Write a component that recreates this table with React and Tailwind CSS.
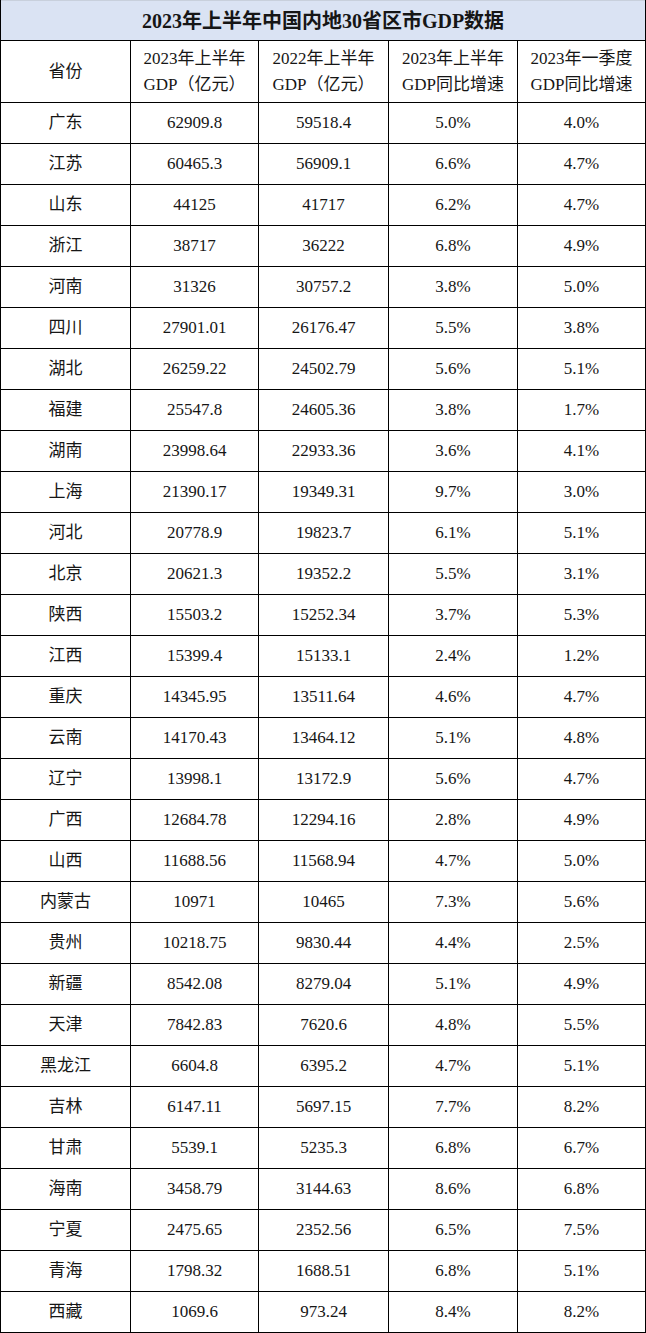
const rows = [
  ['广东', '62909.8', '59518.4', '5.0%', '4.0%'],
  ['江苏', '60465.3', '56909.1', '6.6%', '4.7%'],
  ['山东', '44125', '41717', '6.2%', '4.7%'],
  ['浙江', '38717', '36222', '6.8%', '4.9%'],
  ['河南', '31326', '30757.2', '3.8%', '5.0%'],
  ['四川', '27901.01', '26176.47', '5.5%', '3.8%'],
  ['湖北', '26259.22', '24502.79', '5.6%', '5.1%'],
  ['福建', '25547.8', '24605.36', '3.8%', '1.7%'],
  ['湖南', '23998.64', '22933.36', '3.6%', '4.1%'],
  ['上海', '21390.17', '19349.31', '9.7%', '3.0%'],
  ['河北', '20778.9', '19823.7', '6.1%', '5.1%'],
  ['北京', '20621.3', '19352.2', '5.5%', '3.1%'],
  ['陕西', '15503.2', '15252.34', '3.7%', '5.3%'],
  ['江西', '15399.4', '15133.1', '2.4%', '1.2%'],
  ['重庆', '14345.95', '13511.64', '4.6%', '4.7%'],
  ['云南', '14170.43', '13464.12', '5.1%', '4.8%'],
  ['辽宁', '13998.1', '13172.9', '5.6%', '4.7%'],
  ['广西', '12684.78', '12294.16', '2.8%', '4.9%'],
  ['山西', '11688.56', '11568.94', '4.7%', '5.0%'],
  ['内蒙古', '10971', '10465', '7.3%', '5.6%'],
  ['贵州', '10218.75', '9830.44', '4.4%', '2.5%'],
  ['新疆', '8542.08', '8279.04', '5.1%', '4.9%'],
  ['天津', '7842.83', '7620.6', '4.8%', '5.5%'],
  ['黑龙江', '6604.8', '6395.2', '4.7%', '5.1%'],
  ['吉林', '6147.11', '5697.15', '7.7%', '8.2%'],
  ['甘肃', '5539.1', '5235.3', '6.8%', '6.7%'],
  ['海南', '3458.79', '3144.63', '8.6%', '6.8%'],
  ['宁夏', '2475.65', '2352.56', '6.5%', '7.5%'],
  ['青海', '1798.32', '1688.51', '6.8%', '5.1%'],
  ['西藏', '1069.6', '973.24', '8.4%', '8.2%'],
];

const headers = [
  ['省份'],
  ['2023年上半年', 'GDP（亿元）'],
  ['2022年上半年', 'GDP（亿元）'],
  ['2023年上半年', 'GDP同比增速'],
  ['2023年一季度', 'GDP同比增速'],
];

const gridCols = 'grid grid-cols-[130px_128px_130px_129px_1fr]';

export default function App() {
  return (
    <div className="w-[646px] bg-white text-[#161616] font-['Liberation_Serif','Noto_Sans_CJK_SC',serif]">
      <div className="border-l border-r border-black">
        {/* 标题 */}
        <div className="h-[41px] bg-[#dae3f3] border-b border-black border-t border-t-[#c8d0dc] flex items-center justify-center text-[20px] font-bold">
          2023年上半年中国内地30省区市GDP数据
        </div>

        {/* 表头 */}
        <div className={`${gridCols} h-[62px] border-b border-black`}>
          {headers.map((h, i) => (
            <div
              key={i}
              className={`flex flex-col items-center justify-center text-[17px] leading-[26px] ${i < 4 ? 'border-r border-black' : ''}`}
            >
              {h.map((line) => (
                <span key={line}>{line}</span>
              ))}
            </div>
          ))}
        </div>

        {/* 数据 */}
        {rows.map((r) => (
          <div key={r[0]} className={`${gridCols} h-[41px] border-b border-black`}>
            {r.map((c, i) => (
              <div
                key={i}
                className={`flex items-center justify-center text-[17px] ${i < 4 ? 'border-r border-black' : ''}`}
              >
                {c}
              </div>
            ))}
          </div>
        ))}
      </div>
    </div>
  );
}
